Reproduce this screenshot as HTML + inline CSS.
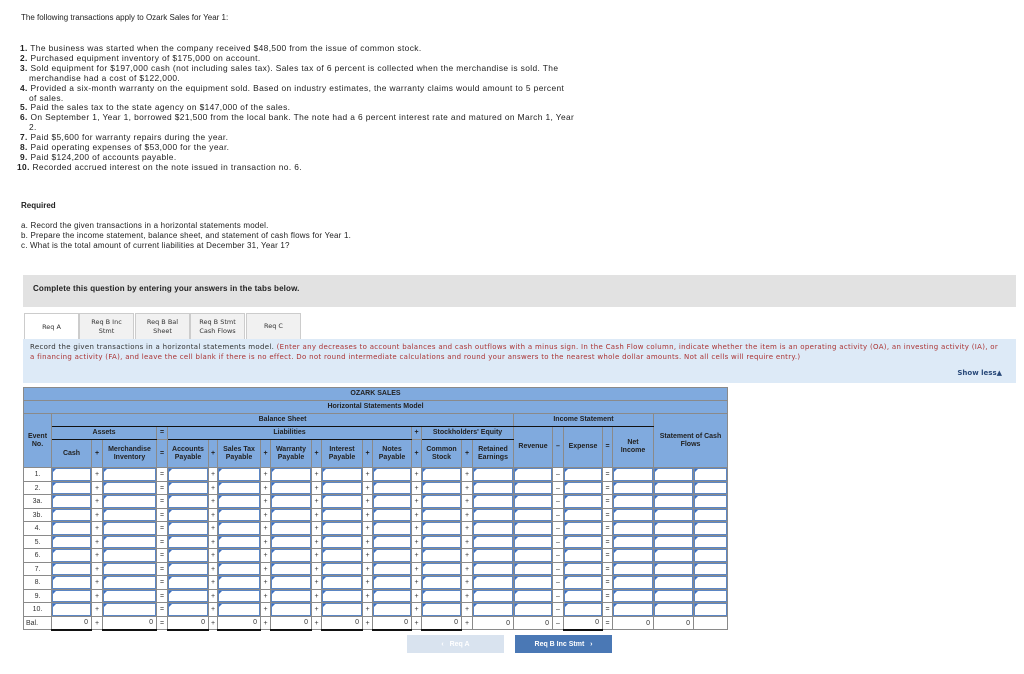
<!DOCTYPE html>
<html><head><meta charset="utf-8"><style>
*{margin:0;padding:0;box-sizing:border-box}
body{width:1024px;height:674px;background:#fff;font-family:"Liberation Sans",sans-serif;color:#222;position:relative;overflow:hidden}
.a{position:absolute;white-space:nowrap}
.t{font-size:8px;line-height:10.5px}
ol{position:absolute;left:20px;top:44px;font-size:8.4px;line-height:9.9px;list-style:none;width:600px;letter-spacing:0.38px}
ol li{padding-left:9px;text-indent:-9px}
ol b{font-weight:bold}
#gray{position:absolute;left:23px;top:275px;width:993px;height:32px;background:#e2e2e2;font-size:8px;font-weight:bold;padding:9px 10px;letter-spacing:0.15px}
.tab{position:absolute;top:313px;height:26px;background:#f1f1f1;border:1px solid #ccc;border-bottom:none;font-family:"DejaVu Sans",sans-serif;font-size:6.5px;text-align:center;line-height:8.5px;display:flex;align-items:center;justify-content:center;color:#333}
#blue{position:absolute;left:23px;top:339px;width:993px;height:44px;background:#ddeaf7;font-family:"DejaVu Sans",sans-serif;font-size:7px;line-height:9.5px;padding:4px 7px;color:#333;letter-spacing:0.3px;white-space:nowrap;overflow:hidden}
#blue span{color:#a33}
table{position:absolute;left:23px;top:387px;border-collapse:collapse;table-layout:fixed;font-size:7px}
td{border:1px solid #8a8a8a;text-align:center;padding:0;overflow:hidden}
.h td{background:#80aade;font-weight:bold;color:#222;line-height:8px}
.d td{background:#fff;color:#333}
td.i{box-shadow:inset 0 0 0 1px #5b86c4;position:relative}
td.i:before{content:"";position:absolute;left:1px;top:1px;border-left:3px solid #3d6fc0;border-bottom:3px solid transparent}
td.b{text-align:right;padding-right:3px;border-bottom:2px solid #111}
.btn{position:absolute;top:635px;height:18px;font-size:7px;font-weight:bold;color:#fff;display:flex;align-items:center;justify-content:center}
</style></head><body>
<div class="a t" style="left:21px;top:13px">The following transactions apply to Ozark Sales for Year 1:</div>
<ol>
<li><b>1.</b> The business was started when the company received $48,500 from the issue of common stock.</li>
<li><b>2.</b> Purchased equipment inventory of $175,000 on account.</li>
<li><b>3.</b> Sold equipment for $197,000 cash (not including sales tax). Sales tax of 6 percent is collected when the merchandise is sold. The<br>merchandise had a cost of $122,000.</li>
<li><b>4.</b> Provided a six-month warranty on the equipment sold. Based on industry estimates, the warranty claims would amount to 5 percent<br>of sales.</li>
<li><b>5.</b> Paid the sales tax to the state agency on $147,000 of the sales.</li>
<li><b>6.</b> On September 1, Year 1, borrowed $21,500 from the local bank. The note had a 6 percent interest rate and matured on March 1, Year<br>2.</li>
<li><b>7.</b> Paid $5,600 for warranty repairs during the year.</li>
<li><b>8.</b> Paid operating expenses of $53,000 for the year.</li>
<li><b>9.</b> Paid $124,200 of accounts payable.</li>
<li style="margin-left:-3px"><b>10.</b> Recorded accrued interest on the note issued in transaction no. 6.</li>
</ol>
<div class="a t" style="left:21px;top:201px;font-weight:bold">Required</div>
<div class="a t" style="left:21px;top:221px;letter-spacing:0.2px">a. Record the given transactions in a horizontal statements model.</div>
<div class="a t" style="left:21px;top:231px;letter-spacing:0.2px">b. Prepare the income statement, balance sheet, and statement of cash flows for Year 1.</div>
<div class="a t" style="left:21px;top:241px;letter-spacing:0.2px">c. What is the total amount of current liabilities at December 31, Year 1?</div>
<div id="gray">Complete this question by entering your answers in the tabs below.</div>
<div class="tab" style="left:24px;width:55px;background:#fff;height:27px">Req A</div>
<div class="tab" style="left:79px;width:55px">Req B Inc<br>Stmt</div>
<div class="tab" style="left:135px;width:55px">Req B Bal<br>Sheet</div>
<div class="tab" style="left:190px;width:55px">Req B Stmt<br>Cash Flows</div>
<div class="tab" style="left:246px;width:55px">Req C</div>
<div id="blue">Record the given transactions in a horizontal statements model. <span>(Enter any decreases to account balances and cash outflows with a minus sign. In the Cash Flow column, indicate whether the item is an operating activity (OA), an investing activity (IA), or<br>a financing activity (FA), and leave the cell blank if there is no effect. Do not round intermediate calculations and round your answers to the nearest whole dollar amounts. Not all cells will require entry.)</span>
<div class="a" style="right:14px;top:30px;font-weight:bold;color:#2a4a7a;letter-spacing:0">Show less▲</div></div>
<table>
<colgroup><col style="width:28px"><col style="width:40px"><col style="width:11px"><col style="width:54px"><col style="width:11px"><col style="width:41px"><col style="width:9px"><col style="width:43px"><col style="width:10px"><col style="width:41px"><col style="width:10px"><col style="width:41px"><col style="width:10px"><col style="width:39px"><col style="width:10px"><col style="width:40px"><col style="width:11px"><col style="width:41px"><col style="width:39px"><col style="width:11px"><col style="width:39px"><col style="width:10px"><col style="width:41px"><col style="width:40px"><col style="width:34px"></colgroup>
<tr class="h" style="height:13px"><td colspan="25">OZARK SALES</td></tr>
<tr class="h" style="height:13px"><td colspan="25">Horizontal Statements Model</td></tr>
<tr class="h" style="height:13px"><td rowspan="3" style="vertical-align:middle">Event<br>No.</td><td colspan="17" style="border-bottom:1px solid #111">Balance Sheet</td><td colspan="5" style="border-bottom:1px solid #111">Income Statement</td><td colspan="2" rowspan="3">Statement of Cash<br>Flows</td></tr>
<tr class="h" style="height:13px"><td colspan="3" style="border-bottom:1px solid #111">Assets</td><td>=</td><td colspan="9" style="border-bottom:1px solid #111">Liabilities</td><td>+</td><td colspan="3" style="border-bottom:1px solid #111">Stockholders' Equity</td><td rowspan="2">Revenue</td><td rowspan="2">–</td><td rowspan="2">Expense</td><td rowspan="2">=</td><td rowspan="2">Net<br>Income</td></tr>
<tr class="h" style="height:28px"><td>Cash</td><td>+</td><td>Merchandise<br>Inventory</td><td>=</td><td>Accounts<br>Payable</td><td>+</td><td>Sales Tax<br>Payable</td><td>+</td><td>Warranty<br>Payable</td><td>+</td><td>Interest<br>Payable</td><td>+</td><td>Notes<br>Payable</td><td>+</td><td>Common<br>Stock</td><td>+</td><td>Retained<br>Earnings</td></tr>
<tr class="d" style="height:14px"><td>1.</td><td class="i"></td><td>+</td><td class="i"></td><td>=</td><td class="i"></td><td>+</td><td class="i"></td><td>+</td><td class="i"></td><td>+</td><td class="i"></td><td>+</td><td class="i"></td><td>+</td><td class="i"></td><td>+</td><td class="i"></td><td class="i"></td><td>–</td><td class="i"></td><td>=</td><td class="i"></td><td class="i"></td><td class="i"></td></tr>
<tr class="d" style="height:13px"><td>2.</td><td class="i"></td><td>+</td><td class="i"></td><td>=</td><td class="i"></td><td>+</td><td class="i"></td><td>+</td><td class="i"></td><td>+</td><td class="i"></td><td>+</td><td class="i"></td><td>+</td><td class="i"></td><td>+</td><td class="i"></td><td class="i"></td><td>–</td><td class="i"></td><td>=</td><td class="i"></td><td class="i"></td><td class="i"></td></tr>
<tr class="d" style="height:14px"><td>3a.</td><td class="i"></td><td>+</td><td class="i"></td><td>=</td><td class="i"></td><td>+</td><td class="i"></td><td>+</td><td class="i"></td><td>+</td><td class="i"></td><td>+</td><td class="i"></td><td>+</td><td class="i"></td><td>+</td><td class="i"></td><td class="i"></td><td>–</td><td class="i"></td><td>=</td><td class="i"></td><td class="i"></td><td class="i"></td></tr>
<tr class="d" style="height:13px"><td>3b.</td><td class="i"></td><td>+</td><td class="i"></td><td>=</td><td class="i"></td><td>+</td><td class="i"></td><td>+</td><td class="i"></td><td>+</td><td class="i"></td><td>+</td><td class="i"></td><td>+</td><td class="i"></td><td>+</td><td class="i"></td><td class="i"></td><td>–</td><td class="i"></td><td>=</td><td class="i"></td><td class="i"></td><td class="i"></td></tr>
<tr class="d" style="height:14px"><td>4.</td><td class="i"></td><td>+</td><td class="i"></td><td>=</td><td class="i"></td><td>+</td><td class="i"></td><td>+</td><td class="i"></td><td>+</td><td class="i"></td><td>+</td><td class="i"></td><td>+</td><td class="i"></td><td>+</td><td class="i"></td><td class="i"></td><td>–</td><td class="i"></td><td>=</td><td class="i"></td><td class="i"></td><td class="i"></td></tr>
<tr class="d" style="height:13px"><td>5.</td><td class="i"></td><td>+</td><td class="i"></td><td>=</td><td class="i"></td><td>+</td><td class="i"></td><td>+</td><td class="i"></td><td>+</td><td class="i"></td><td>+</td><td class="i"></td><td>+</td><td class="i"></td><td>+</td><td class="i"></td><td class="i"></td><td>–</td><td class="i"></td><td>=</td><td class="i"></td><td class="i"></td><td class="i"></td></tr>
<tr class="d" style="height:14px"><td>6.</td><td class="i"></td><td>+</td><td class="i"></td><td>=</td><td class="i"></td><td>+</td><td class="i"></td><td>+</td><td class="i"></td><td>+</td><td class="i"></td><td>+</td><td class="i"></td><td>+</td><td class="i"></td><td>+</td><td class="i"></td><td class="i"></td><td>–</td><td class="i"></td><td>=</td><td class="i"></td><td class="i"></td><td class="i"></td></tr>
<tr class="d" style="height:13px"><td>7.</td><td class="i"></td><td>+</td><td class="i"></td><td>=</td><td class="i"></td><td>+</td><td class="i"></td><td>+</td><td class="i"></td><td>+</td><td class="i"></td><td>+</td><td class="i"></td><td>+</td><td class="i"></td><td>+</td><td class="i"></td><td class="i"></td><td>–</td><td class="i"></td><td>=</td><td class="i"></td><td class="i"></td><td class="i"></td></tr>
<tr class="d" style="height:14px"><td>8.</td><td class="i"></td><td>+</td><td class="i"></td><td>=</td><td class="i"></td><td>+</td><td class="i"></td><td>+</td><td class="i"></td><td>+</td><td class="i"></td><td>+</td><td class="i"></td><td>+</td><td class="i"></td><td>+</td><td class="i"></td><td class="i"></td><td>–</td><td class="i"></td><td>=</td><td class="i"></td><td class="i"></td><td class="i"></td></tr>
<tr class="d" style="height:13px"><td>9.</td><td class="i"></td><td>+</td><td class="i"></td><td>=</td><td class="i"></td><td>+</td><td class="i"></td><td>+</td><td class="i"></td><td>+</td><td class="i"></td><td>+</td><td class="i"></td><td>+</td><td class="i"></td><td>+</td><td class="i"></td><td class="i"></td><td>–</td><td class="i"></td><td>=</td><td class="i"></td><td class="i"></td><td class="i"></td></tr>
<tr class="d" style="height:14px"><td>10.</td><td class="i"></td><td>+</td><td class="i"></td><td>=</td><td class="i"></td><td>+</td><td class="i"></td><td>+</td><td class="i"></td><td>+</td><td class="i"></td><td>+</td><td class="i"></td><td>+</td><td class="i"></td><td>+</td><td class="i"></td><td class="i"></td><td>–</td><td class="i"></td><td>=</td><td class="i"></td><td class="i"></td><td class="i"></td></tr>
<tr class="d" style="height:13px"><td style="text-align:left;padding-left:2px">Bal.</td><td class="b">0</td><td>+</td><td class="b">0</td><td>=</td><td class="b">0</td><td>+</td><td class="b">0</td><td>+</td><td class="b">0</td><td>+</td><td class="b">0</td><td>+</td><td class="b">0</td><td>+</td><td class="b">0</td><td>+</td><td class="b" style="border-bottom:1px solid #8a8a8a">0</td><td class="b" style="border-bottom:1px solid #8a8a8a">0</td><td>–</td><td class="b">0</td><td>=</td><td class="b" style="border-bottom:1px solid #8a8a8a">0</td><td class="b" style="border-bottom:1px solid #8a8a8a">0</td><td></td></tr>
</table>
<div class="btn" style="left:407px;width:97px;background:#d9e3ef">‹&nbsp;&nbsp; Req A</div>
<div class="btn" style="left:515px;width:97px;background:#4a78b5">Req B Inc Stmt &nbsp;&nbsp;›</div>
</body></html>
